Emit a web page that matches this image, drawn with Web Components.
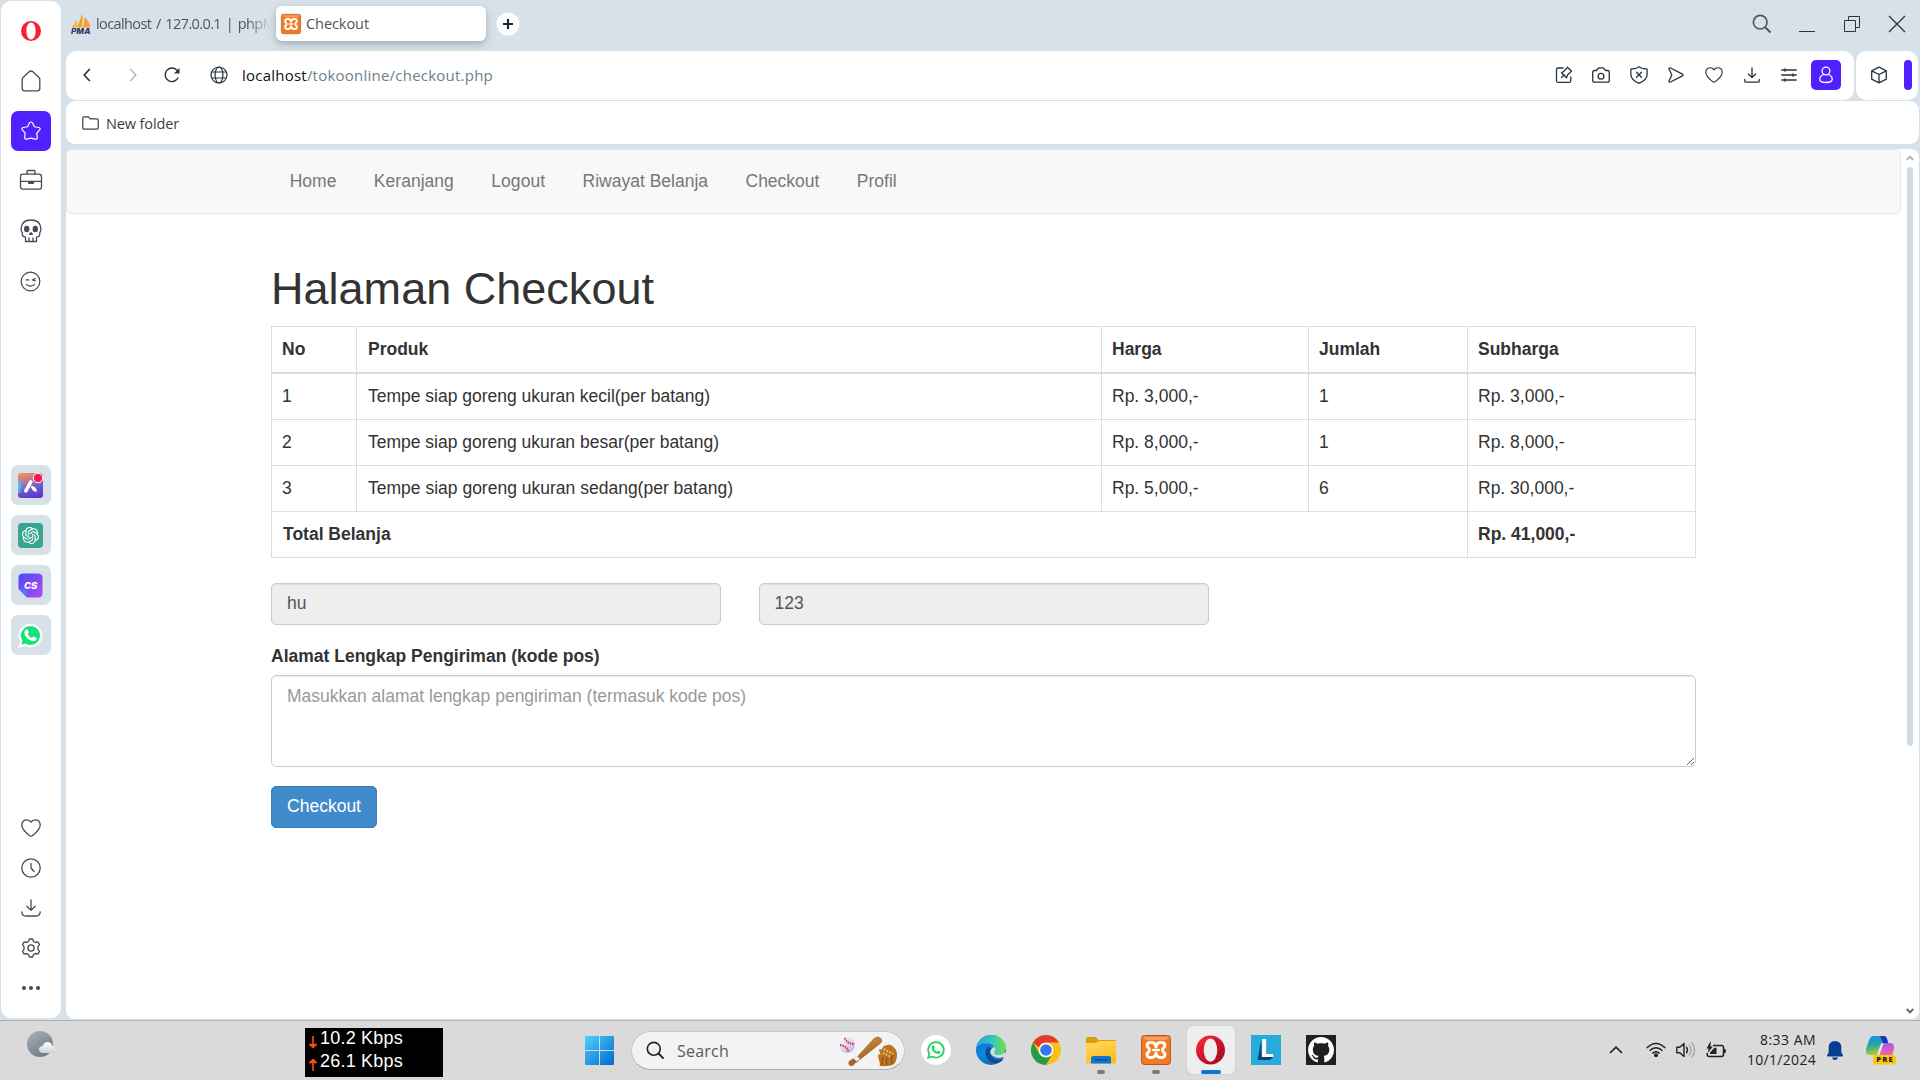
<!DOCTYPE html>
<html lang="id">
<head>
<meta charset="utf-8">
<title>Checkout</title>
<style>
html,body{margin:0;height:1080px;overflow:hidden}
body{background:#d7e1e9;font-family:"Open Sans","Noto Sans",sans-serif;width:1920px;display:flex;flex-direction:column}
.browser{display:flex;height:1020px;gap:5px;padding-left:1px;box-sizing:border-box}
.main{flex:1;display:flex;flex-direction:column;min-width:0}
</style>
</head>
<body>
<div class="browser">
  <side-bar></side-bar>
  <div class="main">
    <tab-strip></tab-strip>
    <address-bar></address-bar>
    <bookmark-bar></bookmark-bar>
    <page-view><shop-nav></shop-nav><checkout-page></checkout-page></page-view>
  </div>
</div>
<task-bar></task-bar>
<script>
const S='fill="none" stroke="currentColor" stroke-width="1.3" stroke-linecap="round" stroke-linejoin="round"';
const xampp=`<rect x=".5" y=".5" width="29" height="29" rx="3" fill="#f47920" stroke="#b55a26"/><path d="M2 2h26l-3 3H5z" fill="#f9a878" opacity=".75"/><path d="M15 11.800Q14 7.500 10.800 7.500H9.500C5.800 7.500 5 11.500 7.800 13.200Q9.300 15 7.800 16.800C5 18.500 5.800 22.500 9.500 22.500h1.300Q14 22.500 15 18.200 16 22.500 19.200 22.500h1.300c3.700 0 4.500-4 1.700-5.700Q20.700 15 22.200 13.200C25 11.500 24.200 7.500 20.500 7.500h-1.300Q16 7.500 15 11.800z" fill="none" stroke="#fff" stroke-width="2.900" stroke-linejoin="round"/><path d="M12.300 15h5.400" stroke="#fff" stroke-width="2.600" stroke-linecap="round"/>`;
const wa='M12 2.500a9.500 9.500 0 0 0-8.200 14.300L2.500 21.500l4.800-1.200A9.500 9.500 0 1 0 12 2.500z';
const phone='M8.300 6.600c.5-.4 1.100-.2 1.300.3l.8 1.900c.1.300 0 .6-.2.900l-.7.9c.8 1.700 2.100 2.900 3.900 3.700l.9-1.100c.2-.3.500-.3.800-.2l1.900.9c.5.200.5.500.4 1-.3 1.500-1.600 2.200-3 2-4.300-.6-7.600-3.900-7.800-7.600 0-1.100.6-2 1.700-2.700z';
const ICONS={
 opera:['0 0 20 20','<path fill="#fa1e32" fill-rule="evenodd" d="M10 0a10 10 0 1 0 0 20 10 10 0 0 0 0-20zm0 1.600c3 0 4.600 3.800 4.600 8.400s-1.600 8.400-4.600 8.400S5.400 14.600 5.400 10 7 1.600 10 1.600z"/>'],
 home:['0 0 22 22',`<path ${S} d="M2.200 9.400Q2.200 8.200 3 7.400L8.800 2a3.200 3.200 0 0 1 4.400 0L19 7.400q.8.8.8 2v9q0 2.400-2.400 2.400H4.600q-2.400 0-2.400-2.400z"/>`],
 star:['0 0 24 24',`<path ${S} d="M10.300 3.200q1.700-2 3.400 0l2.100 4.200 4.800.8q2.200.6.900 2.600l-3.200 3.500.6 5q-.2 2-2.300 1.600L12 19.800l-4.600 1.100q-2.100.4-2.300-1.600l.6-5-3.200-3.500q-1.300-2 .9-2.600l4.800-.8z"/>`],
 brief:['0 0 24 22',`<rect x="1.500" y="5.200" width="21" height="15" rx="2.500" ${S}/><path ${S} d="M8 5V2.600Q8 1.500 9 1.500h6q1 0 1 1.100V5M1.500 12.300h21"/><rect x="9" y="12" width="6" height="3" rx="1" fill="currentColor"/>`],
 skull:['0 0 22 24',`<path ${S} stroke-width="1.600" d="M5.500 22.500v-4.300L3 17.400q-1-2-.8-3.900Q1 12 1.100 9.500 1.600 1 11 1t9.900 8.500q.1 2.500-1.100 4 .2 1.900-.8 3.900l-2.500.8v4.300zM9 22v-3m4 3v-3"/><ellipse cx="6.700" cy="10" rx="2.700" ry="3.300" fill="currentColor"/><ellipse cx="15.300" cy="10" rx="2.700" ry="3.300" fill="currentColor"/><path ${S} d="M9.600 15.300l1.400-1.600 1.400 1.600z"/>`],
 smile:['0 0 22 22',`<circle cx="11" cy="11" r="9.800" ${S} stroke-width="1.600"/><path ${S} stroke-width="1.600" d="M6.800 14q4.200 3.800 8.400 0M6.500 9.300h2.600M16 8l-3 1.400 3 .9"/>`],
 heart:['0 0 20 18',`<path ${S} d="M10 3.200Q8.600.8 5.800.8 1 .8.800 6c0 5 5 8.300 8 10.700q1.200.8 2.400 0c3-2.400 8-5.700 8-10.700Q19 .8 14.200.8 11.400.8 10 3.200z"/>`],
 clock:['0 0 20 20',`<circle cx="10" cy="10" r="9.200" ${S}/><path ${S} d="M10 5.500V10l3 3.500"/>`],
 down:['0 0 20 18',`<path ${S} d="M10 .8v10.500M5.800 7.300l4.200 4 4.200-4M.8 13q.3 4 4 4h10.400q3.700 0 4-4"/>`],
 down2:['0 0 16 16',`<path ${S} stroke-width="1.200" d="M8 1v9.500M4.300 7L8 10.500 11.700 7M.8 12.500V14q0 1.200 1.200 1.200h12q1.200 0 1.200-1.200v-1.500"/>`],
 gear:['0 0 20 20',`<circle cx="10" cy="10" r="3.100" ${S}/><path ${S} d="M7.600 3.300 8.400 1h3.200l.8 2.300 1.900 1.200 2.500-.6 1.700 2.800L17 8.600v2.800l1.500 1.900-1.700 2.800-2.500-.6-1.900 1.200-.8 2.300H8.400l-.8-2.300-1.900-1.200-2.500.6-1.700-2.800L3 11.400V8.600L1.500 6.700l1.700-2.800 2.500.6z"/>`],
 dots:['0 0 20 6','<g fill="currentColor"><circle cx="3" cy="3" r="2"/><circle cx="10" cy="3" r="2"/><circle cx="17" cy="3" r="2"/></g>'],
 aria:['0 0 25 25','<defs><linearGradient id="a" x1=".2" y1="0" x2=".5" y2="1"><stop stop-color="#f98c5e"/><stop offset=".3" stop-color="#c07a8c"/><stop offset=".6" stop-color="#6a64cc"/><stop offset="1" stop-color="#6335cf"/></linearGradient><linearGradient id="b"><stop stop-color="#54c8ee"/><stop offset=".5" stop-color="#54a0ee" stop-opacity="0"/></linearGradient></defs><rect width="25" height="25" rx="3" fill="url(#a)"/><path d="M0 8q5 5 9 12H0z" fill="url(#b)"/><path d="M0 8h12v8H0z" fill="url(#b)"/><path d="M7.800 17.800l5-9" stroke="#fff" stroke-width="3.600" stroke-linecap="round"/><path d="M12.500 13q5.500-.5 6.500 5.500-4.500 1-6.500-5.500z" fill="#fff"/><circle cx="20" cy="5" r="4.700" fill="#ff1450" stroke="#fff"/>'],
 gpt:['0 0 25 25','<rect width="25" height="25" rx="4" fill="#36a68d"/><path transform="translate(3.900 3.900) scale(.715)" fill="#fff" d="M22.2819 9.8211a5.9847 5.9847 0 0 0-.5157-4.9108 6.0462 6.0462 0 0 0-6.5098-2.9A6.0651 6.0651 0 0 0 4.9807 4.1818a5.9847 5.9847 0 0 0-3.9977 2.9 6.0462 6.0462 0 0 0 .7427 7.0966 5.98 5.98 0 0 0 .511 4.9107 6.051 6.051 0 0 0 6.5146 2.9001A5.9847 5.9847 0 0 0 13.2599 24a6.0557 6.0557 0 0 0 5.7718-4.2058 5.9894 5.9894 0 0 0 3.9977-2.9001 6.0557 6.0557 0 0 0-.7475-7.0729zm-9.022 12.6081a4.4755 4.4755 0 0 1-2.8764-1.0408l.1419-.0804 4.7783-2.7582a.7948.7948 0 0 0 .3927-.6813v-6.7369l2.02 1.1686a.071.071 0 0 1 .038.052v5.5826a4.504 4.504 0 0 1-4.4945 4.4944zm-9.6607-4.1254a4.4708 4.4708 0 0 1-.5346-3.0137l.142.0852 4.783 2.7582a.7712.7712 0 0 0 .7806 0l5.8428-3.3685v2.3324a.0804.0804 0 0 1-.0332.0615L9.74 19.9502a4.4992 4.4992 0 0 1-6.1408-1.6464zM2.3408 7.8956a4.485 4.485 0 0 1 2.3655-1.9728V11.6a.7664.7664 0 0 0 .3879.6765l5.8144 3.3543-2.0201 1.1685a.0757.0757 0 0 1-.071 0l-4.8303-2.7865A4.504 4.504 0 0 1 2.3408 7.872zm16.5963 3.8558L13.1038 8.364 15.1192 7.2a.0757.0757 0 0 1 .071 0l4.8303 2.7913a4.4944 4.4944 0 0 1-.6765 8.1042v-5.6772a.79.79 0 0 0-.407-.667zm2.0107-3.0231l-.142-.0852-4.7735-2.7818a.7759.7759 0 0 0-.7854 0L9.409 9.2297V6.8974a.0662.0662 0 0 1 .0284-.0615l4.8303-2.7866a4.4992 4.4992 0 0 1 6.6802 4.66zM8.3065 12.863l-2.02-1.1638a.0804.0804 0 0 1-.038-.0567V6.0742a4.4992 4.4992 0 0 1 7.3757-3.4537l-.142.0805L8.704 5.459a.7948.7948 0 0 0-.3927.6813zm1.0976-2.3654l2.602-1.4998 2.6069 1.4998v2.9994l-2.5974 1.4997-2.6067-1.4997Z"/>'],
 cs:['0 0 25 25','<defs><linearGradient id="c" x2="1" y2="1"><stop stop-color="#4a4cf0"/><stop offset="1" stop-color="#b04af5"/></linearGradient></defs><path d="M5 .5h15Q24.500.5 24.500 5v15q0 4.500-4.500 4.500H9L.5 16V5Q.5.500 5 .5z" fill="url(#c)"/><path d="M.8 16l8.200 8.500V19q-.5-2.500-3-2.500z" fill="#4b7cff"/><text x="12.600" y="16" text-anchor="middle" font-family="Inter" font-weight="800" font-style="italic" font-size="9.500" fill="#fff">CS</text>'],
 wa:['0 0 24 24',`<path d="${wa}" fill="#16e27c" stroke="#fff" stroke-width="2"/><path d="${phone}" fill="#fff"/>`],
 waT:['0 0 30 30',`<circle cx="15" cy="15" r="15" fill="#fff"/><g transform="translate(5.200 5) scale(.82)"><path d="${wa}" fill="none" stroke="#25d366" stroke-width="2.200"/><path d="${phone}" fill="#25d366"/></g>`],
 pma:['0 0 20 20','<path d="M5 5.500Q7 9 5.500 13.500H.5Q4 10.500 5 5.500z" fill="#f9b04a"/><path d="M10.800 0q2 6-.6 13.500H5.800Q9.500 7 10.800 0z" fill="#f89c1c"/><path d="M13 3q5.500 4 6.500 10.500h-8.800Q14 9 13 3z" fill="#f7a334"/><text x="0" y="19.600" textLength="19.500" lengthAdjust="spacingAndGlyphs" font-family="Inter" font-weight="800" font-style="italic" font-size="7.500" fill="#34336e">PMA</text>'],
 xampp:['0 0 30 30',xampp],
 plus:['0 0 24 24','<circle cx="12" cy="12" r="11.500" fill="#fff"/><path d="M12 7v10M7 12h10" stroke="#1c2630" stroke-width="2.200"/>'],
 back:['0 0 8 14','<path d="M6.800 1L1.200 7l5.600 6" fill="none" stroke="currentColor" stroke-width="1.600"/>'],
 fwd:['0 0 8 14','<path d="M1.200 1l5.600 6-5.600 6" fill="none" stroke="currentColor" stroke-width="1.600"/>'],
 reload:['0 0 16 16','<path d="M14.200 10.500A6.800 6.800 0 1 1 12.800 3l1.500 1.600" fill="none" stroke="currentColor" stroke-width="1.400"/><path d="M15.500 1v5.500H10z" fill="currentColor"/>'],
 globe:['0 0 18 18','<g fill="none" stroke="currentColor" stroke-width="1.200"><circle cx="9" cy="9" r="8"/><ellipse cx="9" cy="9" rx="3.900" ry="8"/><path d="M1.800 6h14.400M1.800 12h14.400"/></g>'],
 folder:['0 0 17 14','<path d="M1.700.8h4.500l2 2h6.600q1.400 0 1.400 1.400v7.600q0 1.400-1.400 1.400H2.200Q.8 13.200.8 11.800V1.700q0-.9.900-.9z" fill="none" stroke="currentColor" stroke-width="1.200"/>'],
 pin:['0 0 18 18',`<path ${S} d="M8 2H3.200Q1.500 2 1.500 3.500v11.300q0 1.500 1.500 1.500h11.300q1.500 0 1.500-1.500V11M6.500 11.500l2.700-2.700M6.500 6.700l5 5 1-2.700 4-3.700-4-4L8.900 5.400z"/>`],
 camera:['0 0 18 16',`<path ${S} d="M2.500 3.500h2L6 1.500Q6.500.8 7.300.8h3.400q.8 0 1.300.7l1.500 2h2q1.800 0 1.800 1.800v8q0 1.900-1.800 1.900h-13Q.7 15.200.7 13.300v-8q0-1.800 1.800-1.800z"/><circle cx="9" cy="9.200" r="2.900" ${S}/>`],
 shield:['0 0 18 18',`<path ${S} d="M9 .8l2.200 1.200q2.300 1 5.300.8.600 0 .6.700v5.200q0 5-8.100 8.600Q.9 13.700.9 8.700V3.500q0-.7.6-.7 3 .2 5.300-.8z"/><path ${S} stroke-width="1.400" d="M6.500 6.300l5 5m0-5l-5 5"/>`],
 send:['0 0 16 16',`<path ${S} d="M1 2q0-1.600 1.500-1l12 6.200q1.200.8 0 1.600l-12 6.200Q1 15.600 1 14L3.800 8z"/>`],
 tune:['0 0 16 14',`<path ${S} stroke-width="1.500" d="M.8 2h14.400M.8 7h14.400M.8 12h14.400M4 .8v2.400M12 5.800v2.400M4 10.800v2.400"/>`],
 user:['0 0 16 18',`<circle cx="8" cy="5" r="3.900" ${S}/><path ${S} d="M5.500 8.500Q1.800 10 1.800 13.200q0 3.300 6.200 3.300t6.200-3.300q0-3.200-3.700-4.700"/>`],
 cube:['0 0 18 18',`<path ${S} d="M9 1.200L16.300 4.800v8.400L9 16.800 1.700 13.200V4.800zM1.700 4.800L9 8.500l7.300-3.700M9 8.500v8.300"/>`],
 find:['0 0 20 20','<circle cx="8.200" cy="8.200" r="6.800" fill="none" stroke="currentColor" stroke-width="1.700"/><path d="M13.200 13.200l5.300 5.300" stroke="currentColor" stroke-width="2"/>'],
 min:['0 0 16 16','<path d="M0 15.500h16" stroke="currentColor"/>'],
 restore:['0 0 16 16','<path d="M4.500 4V.5h11v11H12M.5 4.500h11v11H.5z" fill="none" stroke="currentColor"/>'],
 close:['0 0 16 16','<path d="M0 0l16 16M16 0L0 16" stroke="currentColor" stroke-width="1.300"/>'],
 up:['0 0 8 6','<path d="M.8 5L4 1.600 7.200 5" fill="none" stroke="#b5b5b5" stroke-width="2"/>'],
 dn:['0 0 8 6','<path d="M.8 1L4 4.400 7.200 1" fill="none" stroke="#666" stroke-width="2"/>'],
 weather:['0 0 30 28','<defs><linearGradient id="w" x2=".6" y2="1"><stop stop-color="#a9b3bd"/><stop offset="1" stop-color="#727b86"/></linearGradient><linearGradient id="v" x2="0" y2="1"><stop stop-color="#fff"/><stop offset="1" stop-color="#ccd3da"/></linearGradient></defs><circle cx="13" cy="14" r="13" fill="url(#w)"/><path d="M15.500 23q-3.500-.5-3.500-3.500t3.700-3.400Q17 12 20.500 12t5 4.200q3 .3 3 3.300T25 23z" fill="url(#v)"/>'],
 win:['0 0 29 29','<defs><linearGradient id="x" gradientUnits="userSpaceOnUse" x2="29" y2="29"><stop stop-color="#4fd0ff"/><stop offset="1" stop-color="#0068cf"/></linearGradient></defs><path d="M1 0h13v14H0V1q0-1 1-1zM15 0h13q1 0 1 1v13H15zM0 15h14v14H1q-1 0-1-1zM15 15h14v13q0 1-1 1H15z" fill="url(#x)"/>'],
 ball:['0 0 60 32','<defs><linearGradient id="bt" x2=".5" y2="1"><stop stop-color="#d59a52"/><stop offset="1" stop-color="#9a5a1d"/></linearGradient><linearGradient id="bl" x2="1" y2="1"><stop stop-color="#fff"/><stop offset="1" stop-color="#c5a7ea"/></linearGradient></defs><circle cx="9" cy="10" r="8" fill="url(#bl)"/><path d="M7 3q1.500 5.500 9 6M2 10q7 1 8.500 7" fill="none" stroke="#cf4030" stroke-width="2" stroke-dasharray="1.600 .8"/><path d="M16 25L36 3q4-3 7 0 3 3-1 6L18 28z" fill="url(#bt)"/><path d="M13 25l4-3 3 4-4 3z" fill="#9a5a1d"/><path d="M15 23l3-3 4 4-3.500 2.500z" fill="#eee"/><circle cx="13.500" cy="28" r="3" fill="#a5682b"/><path d="M42 29l-2-8q0-2.500 2.500-1.500L41 15q1-2 3 0 0-4 3.500-4.500 5-2 8 1.500 5 4 3 12-1 5-5 6.500-5 1-12 .500z" fill="#bd7420"/><path d="M44 30q-1-4 1.500-8M49 30q-2-6 2-9M54 29q-2-5 1-9" fill="none" stroke="#7e430e"/><path d="M46 14l9 5M45 18l8 4" stroke="#f1d59b" stroke-width="1.800" stroke-dasharray="1.500 1.500"/>'],
 edge:['0 0 30 30','<defs><linearGradient id="e1"><stop stop-color="#2ba7dc"/><stop offset=".5" stop-color="#2fc5c4"/><stop offset="1" stop-color="#72e04c"/></linearGradient><linearGradient id="e2" x2=".5" y2="1"><stop stop-color="#0f65b8"/><stop offset=".6" stop-color="#0e87e3"/><stop offset="1" stop-color="#1268bd"/></linearGradient></defs><circle cx="15" cy="15" r="15" fill="url(#e2)"/><path d="M.3 13C2 5 8 0 15 0c9 0 15 6 15 12.500 0 5-4 7.500-8 7.500-4 0-4.500-2-3.500-3.500C20 13 17 9 12 8.500 6 8 2 10 .3 13z" fill="url(#e1)"/><path d="M12 11.500c-4 3-3 10 1 14 5 4 11 3 14.500-1-5 2-11.500 0-13-5-.6-3 .5-5 1.500-6z" fill="#114a93"/><path d="M14.500 15.500Q15.500 12.500 18 12q2.500 2 .5 4.500-1 3.500 3.500 3.500 4 0 7.500-3l1 4.500Q22 24.500 17 21q-3.500-2.500-2.500-5.500z" fill="#dadada"/>'],
 chrome:['0 0 30 30','<circle cx="15" cy="15" r="15" fill="#fbc116"/><path d="M2 7.500A15 15 0 0 1 28 7.500H15a7.500 7.500 0 0 0-7 5z" fill="#e33b2e"/><path d="M2 7.500A15 15 0 0 0 15 30l6.500-11.300A7.500 7.500 0 0 1 8.500 18.700z" fill="#2a9a48"/><circle cx="15" cy="15" r="7.300" fill="#fff"/><circle cx="15" cy="15" r="5.800" fill="#3478ee"/>'],
 explorer:['0 0 30 30','<defs><linearGradient id="f" x2=".5" y2="1"><stop stop-color="#ffdc62"/><stop offset="1" stop-color="#fcbb23"/></linearGradient></defs><path d="M0 4q0-2 2-2h7.500l3 3H29q1 0 1 1v4H0z" fill="#dc9c0c"/><path d="M0 8h10l3-2h17v21.500q0 1-1 1H1q-1 0-1-1z" fill="url(#f)"/><path d="M5 28.500v-5Q5 21 7.500 21h15q2.500 0 2.500 2.500v5z" fill="#0d75cc"/><path d="M9 24.800h12" stroke="#084a8c" stroke-width="1.300"/>'],
 operaT:['0 0 28 28','<defs><linearGradient id="o" x2=".7" y2="1"><stop stop-color="#ff2a3c"/><stop offset="1" stop-color="#a90a1e"/></linearGradient></defs><ellipse cx="14" cy="14" rx="14" ry="14" fill="url(#o)"/><ellipse cx="14" cy="14" rx="6.600" ry="11.200" fill="#eee"/><path d="M14 2.800c4 0 6.600 4.500 6.600 11.200S18 25.200 14 25.200q5 .8 9-2.700 4-3.500 4-8.500t-4-8.500q-4-3.500-9-2.700z" fill="#bb0d22" opacity=".5"/>'],
 lapp:['0 0 30 30','<rect width="30" height="30" fill="#27acd9"/><path d="M10.500 3.500l-4 21.500H19l3.500-3H11z" fill="#143f71"/><text x="9" y="22.200" font-family="Lato" font-weight="900" font-size="25.500" fill="#fff">L</text>'],
 github:['0 0 30 30','<rect width="30" height="30" fill="#211e20"/><g transform="translate(2.100 2.100) scale(1.620)"><path fill="#fff" d="M8 0C3.580 0 0 3.580 0 8c0 3.540 2.290 6.530 5.470 7.590.4.070.55-.17.55-.38 0-.19-.01-.82-.01-1.490-2.010.37-2.530-.49-2.690-.94-.09-.23-.48-.94-.82-1.130-.28-.15-.68-.52-.01-.53.63-.01 1.080.58 1.230.82.72 1.210 1.870.87 2.330.66.07-.52.28-.87.51-1.070-1.780-.2-3.640-.89-3.640-3.950 0-.87.31-1.590.82-2.150-.08-.2-.36-1.020.08-2.120 0 0 .67-.21 2.200.82.64-.18 1.320-.27 2-.27s1.360.09 2 .27c1.530-1.040 2.200-.82 2.200-.82.44 1.100.16 1.920.08 2.120.51.56.82 1.270.82 2.150 0 3.070-1.870 3.750-3.650 3.950.29.25.54.73.54 1.480 0 1.070-.01 1.930-.01 2.200 0 .21.15.46.55.38A8.010 8.010 0 0 0 16 8c0-4.420-3.580-8-8-8z"/></g>'],
 chev:['0 0 14 8','<path d="M1 7l6-5.800L13 7" fill="none" stroke="#222" stroke-width="1.700"/>'],
 wifi:['0 0 20 16','<g fill="none" stroke="#222" stroke-width="1.500"><path d="M.7 6Q10-3 19.300 6M3.500 8.800q6.500-6.200 13 0M6.300 11.500q3.700-3.500 7.400 0"/></g><circle cx="10" cy="13.300" r="2" fill="#222"/>'],
 sound:['0 0 20 18','<path d="M.8 6.200v5.600h3L8 15.500v-13L3.800 6.200z" fill="none" stroke="#222" stroke-width="1.400" stroke-linejoin="round"/><g fill="none" stroke-linecap="round" stroke-width="1.400"><path d="M10.500 6.200q2 2.800 0 5.600" stroke="#222"/><path d="M13.300 4q3.600 5 0 10M16 1.800q5.200 7.200 0 14.400" stroke="#a9a9a9"/></g>'],
 batt:['0 0 20 18','<path d="M7 4.500h8.500q2 0 2 2v7q0 2-2 2H3.200q-2 0-2-2V12" fill="none" stroke="#222" stroke-width="1.500"/><path d="M18 7.800q2 0 2 2.200t-2 2.200z" fill="#222"/><path d="M8.500 6.800h2V13H4v-1.500zM4.800 0L.5 7.500h2.200L1.700 12 6.800 5.500H4.500z" fill="#222"/>'],
 bell:['0 0 16 19','<path d="M8 0q6.300 0 6.300 6.500v4.800L16 14.500q0 1-1 1H1q-1 0-1-1l1.700-3.200V6.500Q1.700 0 8 0zM5 16.500h6Q10.500 19 8 19t-3-2.500z" fill="#063f91"/>'],
 copilot:['0 0 30 29','<defs><linearGradient id="p1" x2=".2" y2="1"><stop stop-color="#1b8df0"/><stop offset=".5" stop-color="#27a3a8"/><stop offset="1" stop-color="#a8d22c"/></linearGradient><linearGradient id="p2" x2="0" y2="1"><stop stop-color="#a657ed"/><stop offset="1" stop-color="#f46a9a"/></linearGradient></defs><path d="M8 0h10q3 0 4 7h-4q-3 0-4 3l-3 9H4q-5 0-4-6l3-9q1.500-4 5-4z" fill="url(#p1)"/><path d="M14 0h4q3 0 4 7h-5z" fill="#1535c8"/><path d="M18 7h6q5 0 4 6l-2 7H13l2.500-8Q16.500 7 18 7z" fill="url(#p2)"/><path d="M16.500 7.500l-4.500 12" stroke="#f3e8f2" stroke-width="2"/><rect x="7" y="19" width="23" height="9.500" rx="3" fill="#ffc60b"/><text x="10.200" y="26.400" textLength="16.500" font-family="Open Sans" font-weight="800" font-size="7.600" fill="#222">PRE</text>']
};
const def=(tag,css,html)=>customElements.define(tag,class extends HTMLElement{
  constructor(){super();this.attachShadow({mode:'open'}).innerHTML=`<style>:host{display:block;box-sizing:border-box}*{box-sizing:border-box}${css}</style>${html}`}
});
const i=(n,w,h=w,x='')=>`<ui-icon name="${n}" w="${w}" h="${h}" ${x}></ui-icon>`;

def('side-bar',`:host{width:60px;height:1017px;margin-top:1px;background:#fff;border-radius:10px;display:flex;flex-direction:column;align-items:center;color:#434c55;padding:5px 1px 10px 0}
.n{height:50px;width:60px;display:grid;place-items:center}.on{background:#5020ff;color:#fff;height:40px;width:40px;border-radius:7px;display:grid;place-items:center}
.apps{margin-top:159px;display:flex;flex-direction:column;gap:10px}.apps div{width:40px;height:40px;border-radius:7px;background:#d7e1e8;display:grid;place-items:center}
.low{margin-top:auto}.low div{height:40px;display:grid;place-items:center}`,
`<div class="n">${i('opera',20)}</div><div class="n">${i('home',22)}</div><div class="n"><div class="on">${i('star',22)}</div></div><div class="n" style="padding-bottom:2px">${i('brief',24,22)}</div><div class="n">${i('skull',22,24)}</div><div class="n">${i('smile',21)}</div>
<div class="apps"><div>${i('aria',25)}</div><div>${i('gpt',25)}</div><div>${i('cs',25)}</div><div>${i('wa',27)}</div></div>
<div class="low"><div>${i('heart',20,18)}</div><div>${i('clock',20)}</div><div>${i('down',20,18)}</div><div>${i('gear',20)}</div><div>${i('dots',20,6)}</div></div>`);

def('tab-strip',`:host{height:51px;display:flex;color:#505459;font-size:14.500px}
.t{height:35px;margin-top:6px;display:flex;align-items:center}
.a{width:210px;padding-left:5px;gap:5px;word-spacing:1.500px}.a span{width:180px;white-space:nowrap;-webkit-mask:linear-gradient(90deg,#000 84%,transparent 97%)}
.b{width:210px;background:#fff;border-radius:6px;padding-left:5px;gap:5px;box-shadow:0 3px 7px #7d8b9899}
.p{margin:12px 0 0 10px;height:24px}
.w{margin:0 15px 0 auto;height:48px;display:flex;align-items:center;color:#333}`,
`<div class="t a">${i('pma',20)}<span><fit-text w="179">localhost / 127.0.0.1 | phpM</fit-text></span></div><div class="t b">${i('xampp',20)}<fit-text w="63">Checkout</fit-text></div><div class="p">${i('plus',24)}</div>
<div class="w">${i('find',20,20,'style="margin-right:27px;color:#555"')}${i('min',16,16,'style="margin-right:29px"')}${i('restore',16,16,'style="margin-right:29px"')}${i('close',16)}</div>`);

def('address-bar',`:host{height:49px;display:flex;gap:2px;color:#28333d;padding-right:2px}
.bar{flex:1;background:#fff;border-radius:10px;display:flex;align-items:center;padding:0 13px 1px 17px;font-size:15px}
.u{color:#6f7f8d;margin:-1px 0 0 14px}.u b{font-weight:400;color:#111}
.r{margin-left:auto;display:flex;align-items:center}.r div{width:37.600px;display:grid;place-items:center}
.me{width:30px!important;height:30px;background:#5020ff;border-radius:5px;color:#fff;margin-left:3px}
.ext{width:62px;background:#fff;border-radius:10px;display:flex;align-items:center;padding:0 0 1px 14px;gap:16px}.ext i{width:8px;height:30px;border-radius:4px;background:#5020ff}`,
`<div class="bar">${i('back',8,14)}${i('fwd',8,14,'style="margin-left:38px;color:#bbb"')}${i('reload',16,16,'style="margin-left:27px"')}${i('globe',18,18,'style="margin-left:30px"')}<span class="u"><fit-text w="251"><b>localhost</b>/tokoonline/checkout.php</fit-text></span>
<div class="r"><div>${i('pin',18)}</div><div>${i('camera',18,16)}</div><div>${i('shield',18)}</div><div>${i('send',16)}</div><div>${i('heart',18,16)}</div><div>${i('down2',16)}</div><div>${i('tune',16,14)}</div><div class="me">${i('user',16,18)}</div></div></div>
<div class="ext">${i('cube',18)}<i></i></div>`);

def('bookmark-bar',`:host{height:43px;margin:1px 1px 0 0;background:#fff;border-radius:9px;display:flex;align-items:center;padding:1px 0 0 16px;gap:7px;color:#3a3f45;font-size:14.500px}`,
`${i('folder',17,14)}<fit-text w="73">New folder</fit-text>`);

def('page-view',`:host{margin:5px 1px 1px 0;flex:1;background:#fff;border-radius:8px;display:flex;overflow:hidden;font-family:"Liberation Sans",Arial,sans-serif;font-size:17.500px;line-height:25px;color:#333}
.c{width:1835px}.s{width:18px;display:flex;flex-direction:column;align-items:center;padding:6px 0 5px}.s i{width:6px;height:579px;border-radius:3px;background:#d0dce4;margin:6px auto auto 6px}`,
`<div class="c"><slot></slot></div><div class="s">${i('up',8,6)}<i></i>${i('dn',8,6)}</div>`);

def('shop-nav',`:host{height:64.500px;background:#f8f8f8;border:1px solid #e7e7e7;border-radius:5px;display:flex;padding-left:204px;color:#777}
a{padding:18.750px}`,
[['Home',46.600],['Keranjang',80],['Logout',53.700],['Riwayat Belanja',125.500],['Checkout',73.700],['Profil',40]].map(x=>`<a><fit-text w="${x[1]}">${x[0]}</fit-text></a>`).join(''));

const rp=[['1','Tempe siap goreng ukuran kecil(per batang)','Rp. 3,000,-','1','Rp. 3,000,-',342],['2','Tempe siap goreng ukuran besar(per batang)','Rp. 8,000,-','1','Rp. 8,000,-',351],['3','Tempe siap goreng ukuran sedang(per batang)','Rp. 5,000,-','6','Rp. 30,000,-',365]];
def('checkout-page',`:host{margin:25px auto 0;width:1425px;padding-top:25px}
h1{font-weight:400;font-size:45px;line-height:49.500px;margin:0 0 12.500px}
table{border-collapse:collapse;table-layout:fixed;width:1425px;margin:0 0 25px}
td,th{border:1px solid #ddd;padding:10px;text-align:left;height:46px;line-height:25px}thead th{border-bottom-width:2px}
td:nth-child(2),th:nth-child(2):not(:last-child){padding-left:11px}tfoot th:first-child{padding-left:11px}
.row{display:flex;gap:37.500px;margin-bottom:18.750px}
input,textarea{display:block;font:inherit;border:1px solid #ccc;border-radius:5px;padding:7.500px 15px;box-shadow:inset 0 1px 1px #00000013;color:#555;outline:0;margin:0}
input{width:450px;height:42.500px;background:#eee}
label{display:block;font-weight:700;margin-bottom:6.250px}
textarea{width:1425px;height:91.750px;margin-bottom:18.750px}textarea::placeholder{color:#999}
button{font:inherit;height:42.500px;width:106px;color:#fff;background:#428bca;border:1px solid #357ebd;border-radius:5px;padding:0}`,
`<h1><fit-text w="383">Halaman Checkout</fit-text></h1>
<table><colgroup><col style="width:85px"><col style="width:745px"><col style="width:207px"><col style="width:159px"><col></colgroup>
<thead><tr><th>No</th><th>Produk</th><th>Harga</th><th>Jumlah</th><th>Subharga</th></tr></thead>
<tbody>${rp.map(r=>`<tr><td>${r[0]}</td><td><fit-text w="${r[5]}">${r[1]}</fit-text></td><td>${r[2]}</td><td>${r[3]}</td><td>${r[4]}</td></tr>`).join('')}</tbody>
<tfoot><tr><th colspan="4">Total Belanja</th><th>Rp. 41,000,-</th></tr></tfoot></table>
<div class="row"><input readonly value="hu"><input readonly value="123"></div>
<label>Alamat Lengkap Pengiriman (kode pos)</label>
<textarea placeholder="Masukkan alamat lengkap pengiriman (termasuk kode pos)"></textarea>
<button><fit-text w="74">Checkout</fit-text></button>`);

def('task-bar',`:host{height:60px;background:#dadada;border-top:1px solid #a9b2b8;display:flex;align-items:flex-start;color:#222}
.kb{margin:7px 0 0 248px;width:138px;height:49px;background:#000;color:#fff;font:18px/23px "Liberation Sans",Arial,sans-serif;padding:0 0 0 4px}
.kb div{display:flex;gap:3px;align-items:center;height:23px}.kb svg{margin-top:5px}.kb fit-text{margin-top:-2px}
.s{margin:10px 0 0 17px;width:274px;height:39px;border-radius:20px;background:#f3f3f3;border:1px solid #c8c8c8;border-bottom-color:#aaa;display:flex;align-items:center;padding:0 6px 0 14px;font-size:16px;color:#5a5a5a}
.apps{display:flex;margin:5px 0 0 7px;gap:7px}.apps div{width:48px;height:48px;border-radius:5px;display:flex;flex-direction:column;align-items:center;padding-top:9px}
.apps i{width:8px;height:4px;border-radius:2px;background:#7c7c7c;margin-top:5px}.apps .on{background:#eee;box-shadow:0 0 1px #999;padding-right:1px}.on i{width:20px;background:#0878d4}
.tray{margin-left:auto;display:flex;align-items:center;height:58px;padding-right:24px}
.time{width:69px;margin-left:21px;font-size:14px;line-height:20px;text-align:right}`,
`${i('weather',30,28,'style="margin:9px 0 0 27px"')}
<div class="kb"><div><svg width="8" height="12" viewBox="0 0 8 12"><path d="M4 0v11M1 8.500h6L4 11.500z" stroke="#ff4a10" stroke-width="1.600" fill="#ff4a10"/></svg><fit-text w="83">10.2 Kbps</fit-text></div><div><svg width="8" height="12" viewBox="0 0 8 12"><path d="M4 12V1M1 3.500h6L4 .5z" stroke="#ff4a10" stroke-width="1.600" fill="#ff4a10"/></svg><fit-text w="83">26.1 Kbps</fit-text></div></div>
${i('win',29,29,'style="margin:15px 0 0 142px"')}
<div class="s">${i('find',19,19,'style="color:#222;margin-right:12px"')}<fit-text w="52">Search</fit-text>${i('ball',60,32,'style="margin-left:auto"')}</div>
<div class="apps"><div>${i('waT',30)}</div><div>${i('edge',30)}</div><div>${i('chrome',30)}</div><div>${i('explorer',30)}<i></i></div><div>${i('xampp',30)}<i></i></div><div class="on">${i('operaT',29,30)}<i></i></div><div>${i('lapp',30)}</div><div>${i('github',30)}</div></div>
<div class="tray">${i('chev',14,8)}${i('wifi',20,16,'style="margin-left:23px"')}${i('sound',20,18,'style="margin-left:10px"')}${i('batt',20,18,'style="margin-left:10px"')}<div class="time"><fit-text w="56">8:33 AM</fit-text><br><fit-text w="69">10/1/2024</fit-text></div>${i('bell',16,19,'style="margin-left:11px"')}${i('copilot',30,29,'style="margin-left:23px"')}</div>`);

customElements.define('ui-icon',class extends HTMLElement{
  constructor(){super();this.attachShadow({mode:'open'})}
  connectedCallback(){const [vb,g]=ICONS[this.getAttribute('name')],w=this.getAttribute('w'),h=this.getAttribute('h');
    this.shadowRoot.innerHTML=`<style>:host{display:block;flex:none;width:${w}px;height:${h}px}svg{display:block;overflow:visible}</style><svg width="${w}" height="${h}" viewBox="${vb}">${g}</svg>`}
});
/* Keeps a one-line label at a given width by adjusting its tracking. */
customElements.define('fit-text',class extends HTMLElement{
  constructor(){super();this.attachShadow({mode:'open'}).innerHTML='<style>:host{display:inline-block;white-space:nowrap}</style><slot></slot>'}
  connectedCallback(){const w=this.getBoundingClientRect().width;
    this.style.letterSpacing=((+this.getAttribute('w')-w)/this.textContent.length).toFixed(3)+'px'}
});
</script>
</body>
</html>
